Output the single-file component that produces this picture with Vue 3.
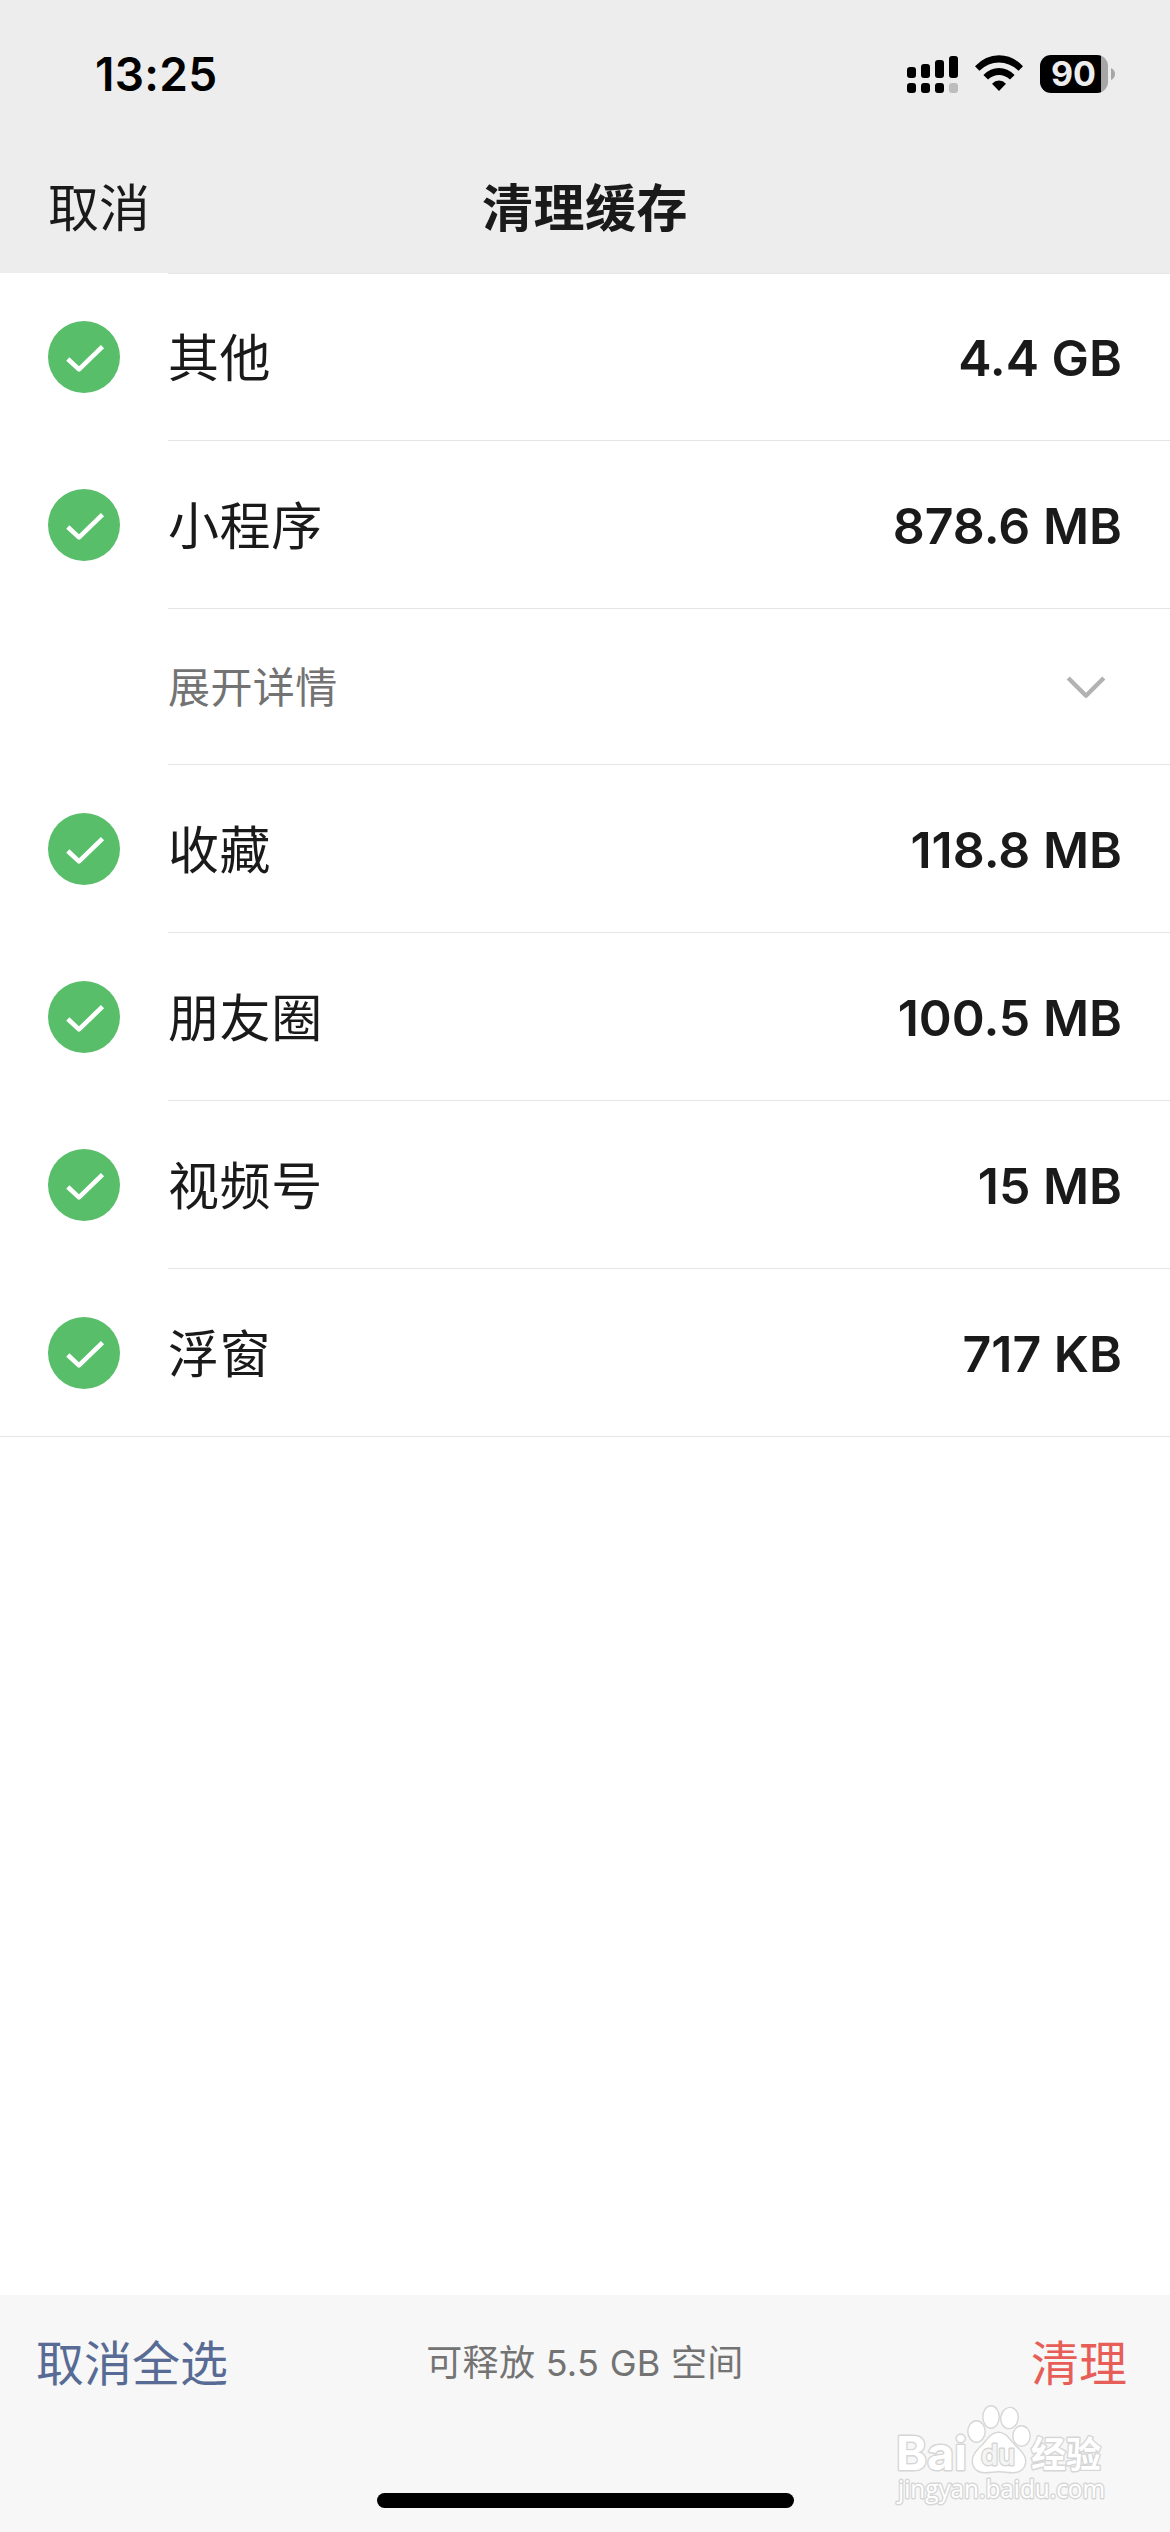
<script setup>
import { computed, ref } from 'vue'

const items = ref([
  { id: 1, name: '其他', size: '4.4 GB', checked: true },
  { id: 2, name: '小程序', size: '878.6 MB', checked: true, detail: true },
  { id: 3, name: '收藏', size: '118.8 MB', checked: true },
  { id: 4, name: '朋友圈', size: '100.5 MB', checked: true },
  { id: 5, name: '视频号', size: '15 MB', checked: true },
  { id: 6, name: '浮窗', size: '717 KB', checked: true },
])

const allChecked = computed(() => items.value.every((item) => item.checked))

function toggleAll() {
  const next = !allChecked.value
  items.value.forEach((item) => (item.checked = next))
}
</script>

<template>
  <div class="page">
    <header class="header">
      <div class="status">
        <span class="time">13:25</span>
        <div class="status-icons">
          <svg class="signal" width="51" height="38" viewBox="0 0 51 38">
            <rect x="0" y="12" width="9" height="11" rx="3" />
            <rect x="14" y="9" width="9" height="14" rx="3" />
            <rect x="28" y="5" width="9" height="18" rx="3" />
            <rect x="42" y="1" width="9" height="22" rx="3" />
            <rect x="0" y="28" width="9" height="10" rx="3" />
            <rect x="14" y="28" width="9" height="10" rx="3" />
            <rect x="28" y="28" width="9" height="10" rx="3" />
            <rect x="42" y="28" width="9" height="10" rx="3" fill="#bdbdbd" />
          </svg>
          <svg class="wifi" width="48" height="38" viewBox="0 0 48 38">
            <path d="M0 11.3Q10.3 0.3 24 0.3T48 11.3L43.6 15.8Q34.6 7.6 24 7.6T4.4 15.8Z" />
            <path d="M8.4 20Q15.3 13 24 13T39.6 20L35 24.6Q30 20 24 20T13 24.6Z" />
            <path d="M17 28.8Q20 25.6 24 25.6T31 28.8L24 36Z" />
          </svg>
          <div class="battery">
            <span class="battery-body">90</span>
            <svg width="4" height="12" viewBox="0 0 4 12">
              <path d="M0 0Q4 2 4 6T0 12Z" fill="#a6a6a6" />
            </svg>
          </div>
        </div>
      </div>
      <nav class="nav">
        <span class="nav-cancel">取消</span>
        <h1 class="nav-title">清理缓存</h1>
      </nav>
    </header>

    <ul class="list">
      <template v-for="item in items" :key="item.id">
        <li class="row" @click="item.checked = !item.checked">
          <span class="check" :class="{ off: !item.checked }">
            <svg v-if="item.checked" width="72" height="72" viewBox="0 0 72 72">
              <path d="M19.8 38L31 48.4L54.5 25.7" />
            </svg>
          </span>
          <div class="row-body">
            <span class="name">{{ item.name }}</span>
            <span class="size">{{ item.size }}</span>
          </div>
        </li>
        <li v-if="item.detail" class="row detail">
          <div class="row-body">
            <span class="detail-text">展开详情</span>
            <svg class="chevron" width="40" height="24" viewBox="0 0 40 24">
              <path d="M2.2 3L20 20.8L37.8 3" />
            </svg>
          </div>
        </li>
      </template>
    </ul>

    <footer class="footer">
      <div class="actions">
        <button class="select-all" @click="toggleAll">{{ allChecked ? '取消全选' : '全选' }}</button>
        <span class="summary">可释放 5.5 GB 空间</span>
        <button class="clean">清理</button>
      </div>
      <div class="home-bar"></div>
    </footer>

    <!-- 水印 -->
    <svg class="watermark" width="230" height="120" viewBox="0 0 230 120">
      <g class="mark">
        <text x="6" y="71" class="brand" textLength="71" lengthAdjust="spacingAndGlyphs">Bai</text>
        <ellipse cx="86.500" cy="32.500" rx="8" ry="10" />
        <ellipse cx="101" cy="18" rx="7.500" ry="10.500" />
        <ellipse cx="119.500" cy="19" rx="8" ry="10" transform="rotate(8 119.500 19)" />
        <ellipse cx="131.500" cy="37" rx="8" ry="9.500" />
        <path
          d="M108.500 34C101 34 98 41 92 47C87 52 83 56 83 62C83 69 88 73 95 73C100 73 104 72 109 72C114 72 118 73 123 73C130 73 135 69 135 62C135 56 130 52 125 47C119 41 116 34 108.500 34Z"
        />
        <text x="91" y="66" class="du" textLength="34" lengthAdjust="spacingAndGlyphs">du</text>
        <text x="141" y="69" class="cn" textLength="70" lengthAdjust="spacingAndGlyphs">经验</text>
        <text x="8" y="99" class="site" textLength="207" lengthAdjust="spacingAndGlyphs">jingyan.baidu.com</text>
      </g>
    </svg>
  </div>
</template>

<style>
body {
  background: #fff;
}
</style>

<style scoped>
.page {
  position: relative;
  display: flex;
  flex-direction: column;
  width: 1170px;
  height: 2532px;
  overflow: hidden;
  background: #fff;
  color: #1a1a1a;
  font-family: Inter, 'Noto Sans CJK SC', sans-serif;
}

/* 顶部 */
.header {
  height: 273px;
  background: #ededed;
}
.status {
  display: flex;
  align-items: center;
  justify-content: space-between;
  height: 148px;
  padding: 0 55px 0 95px;
  color: #000;
}
.time {
  font-size: 46px;
  font-weight: 600;
  letter-spacing: 0.3px;
}
.status-icons {
  display: flex;
  align-items: center;
}
.wifi {
  margin: 0 17px;
}
.battery {
  display: flex;
  align-items: center;
  gap: 3px;
}
.battery-body {
  width: 68px;
  height: 38px;
  padding-right: 1px;
  box-sizing: border-box;
  border-radius: 11px;
  background: linear-gradient(to right, #000 61px, #a6a6a6 61px);
  color: #ededed;
  font-size: 34px;
  font-weight: 700;
  line-height: 38px;
  text-align: center;
}
.nav {
  display: grid;
  grid-template-columns: 1fr auto 1fr;
  align-items: center;
  height: 121px;
  padding: 0 48px;
  font-size: 51px;
  line-height: 121px;
}
.nav-title {
  margin: 0;
  font-size: 51px;
  font-weight: 600;
  letter-spacing: 0.5px;
}

/* 列表 */
.list {
  flex: 1;
  margin: 0;
  padding: 0;
  list-style: none;
}
.row {
  display: flex;
  align-items: center;
  height: 168px;
  padding-left: 48px;
}
.row:last-child {
  box-shadow: inset 0 -1px #e5e5e5;
}
.check {
  width: 72px;
  height: 72px;
  margin-right: 48px;
  border-radius: 50%;
  background: #58be6a;
}
.check.off {
  background: #d8d8d8;
}
.check svg {
  display: block;
}
.check path {
  fill: none;
  stroke: #fff;
  stroke-width: 4.6;
  stroke-linejoin: round;
}
.row-body {
  display: flex;
  flex: 1;
  align-items: center;
  justify-content: space-between;
  height: 100%;
  padding-right: 48px;
  box-shadow: inset 0 -1px #e5e5e5;
}
.row:first-child .row-body {
  box-shadow: inset 0 -1px #e5e5e5, inset 0 1px #e5e5e5;
}
.name {
  padding-bottom: 5px;
  font-size: 51px;
  letter-spacing: 0.6px;
}
.size {
  padding-top: 2px;
  font-size: 50px;
  font-weight: 600;
}
.detail {
  height: 156px;
  padding-left: 168px;
}
.detail .row-body {
  padding-right: 64px;
}
.detail-text {
  padding-bottom: 6px;
  color: #737373;
  font-size: 42px;
  letter-spacing: 0.4px;
}
.chevron path {
  fill: none;
  stroke: #b2b2b2;
  stroke-width: 4.4;
  stroke-linejoin: round;
}

/* 底部 */
.footer {
  display: flex;
  flex-direction: column;
  align-items: center;
  justify-content: space-between;
  height: 237px;
  padding-bottom: 24px;
  box-sizing: border-box;
  background: #f7f7f7;
}
.actions {
  display: grid;
  grid-template-columns: 1fr auto 1fr;
  align-items: center;
  width: 100%;
  height: 130px;
  padding: 0 36px;
  box-sizing: border-box;
}
.actions button {
  padding: 0;
  border: 0;
  background: none;
  font-family: inherit;
  font-size: 48px;
  cursor: pointer;
}
.select-all {
  justify-self: start;
  color: #576b95;
}
.clean {
  justify-self: end;
  margin-right: 7px;
  color: #e75e58;
}
.summary {
  color: #737373;
  font-size: 36px;
  letter-spacing: 0.3px;
}
.home-bar {
  width: 417px;
  height: 15px;
  border-radius: 8px;
  background: #000;
}

.watermark {
  position: absolute;
  right: 50px;
  bottom: 13px;
}
.mark {
  fill: #fff;
  stroke: #d6d6d6;
  stroke-width: 2.8;
  stroke-linejoin: round;
  paint-order: stroke;
}
.brand {
  font: 700 46px Inter, sans-serif;
}
.du {
  fill: #f4f4f4;
  font: 600 29px Inter, sans-serif;
}
.cn {
  font: 700 36px 'Noto Sans CJK SC', sans-serif;
}
.site {
  font: 400 25px 'Open Sans', sans-serif;
}
</style>
